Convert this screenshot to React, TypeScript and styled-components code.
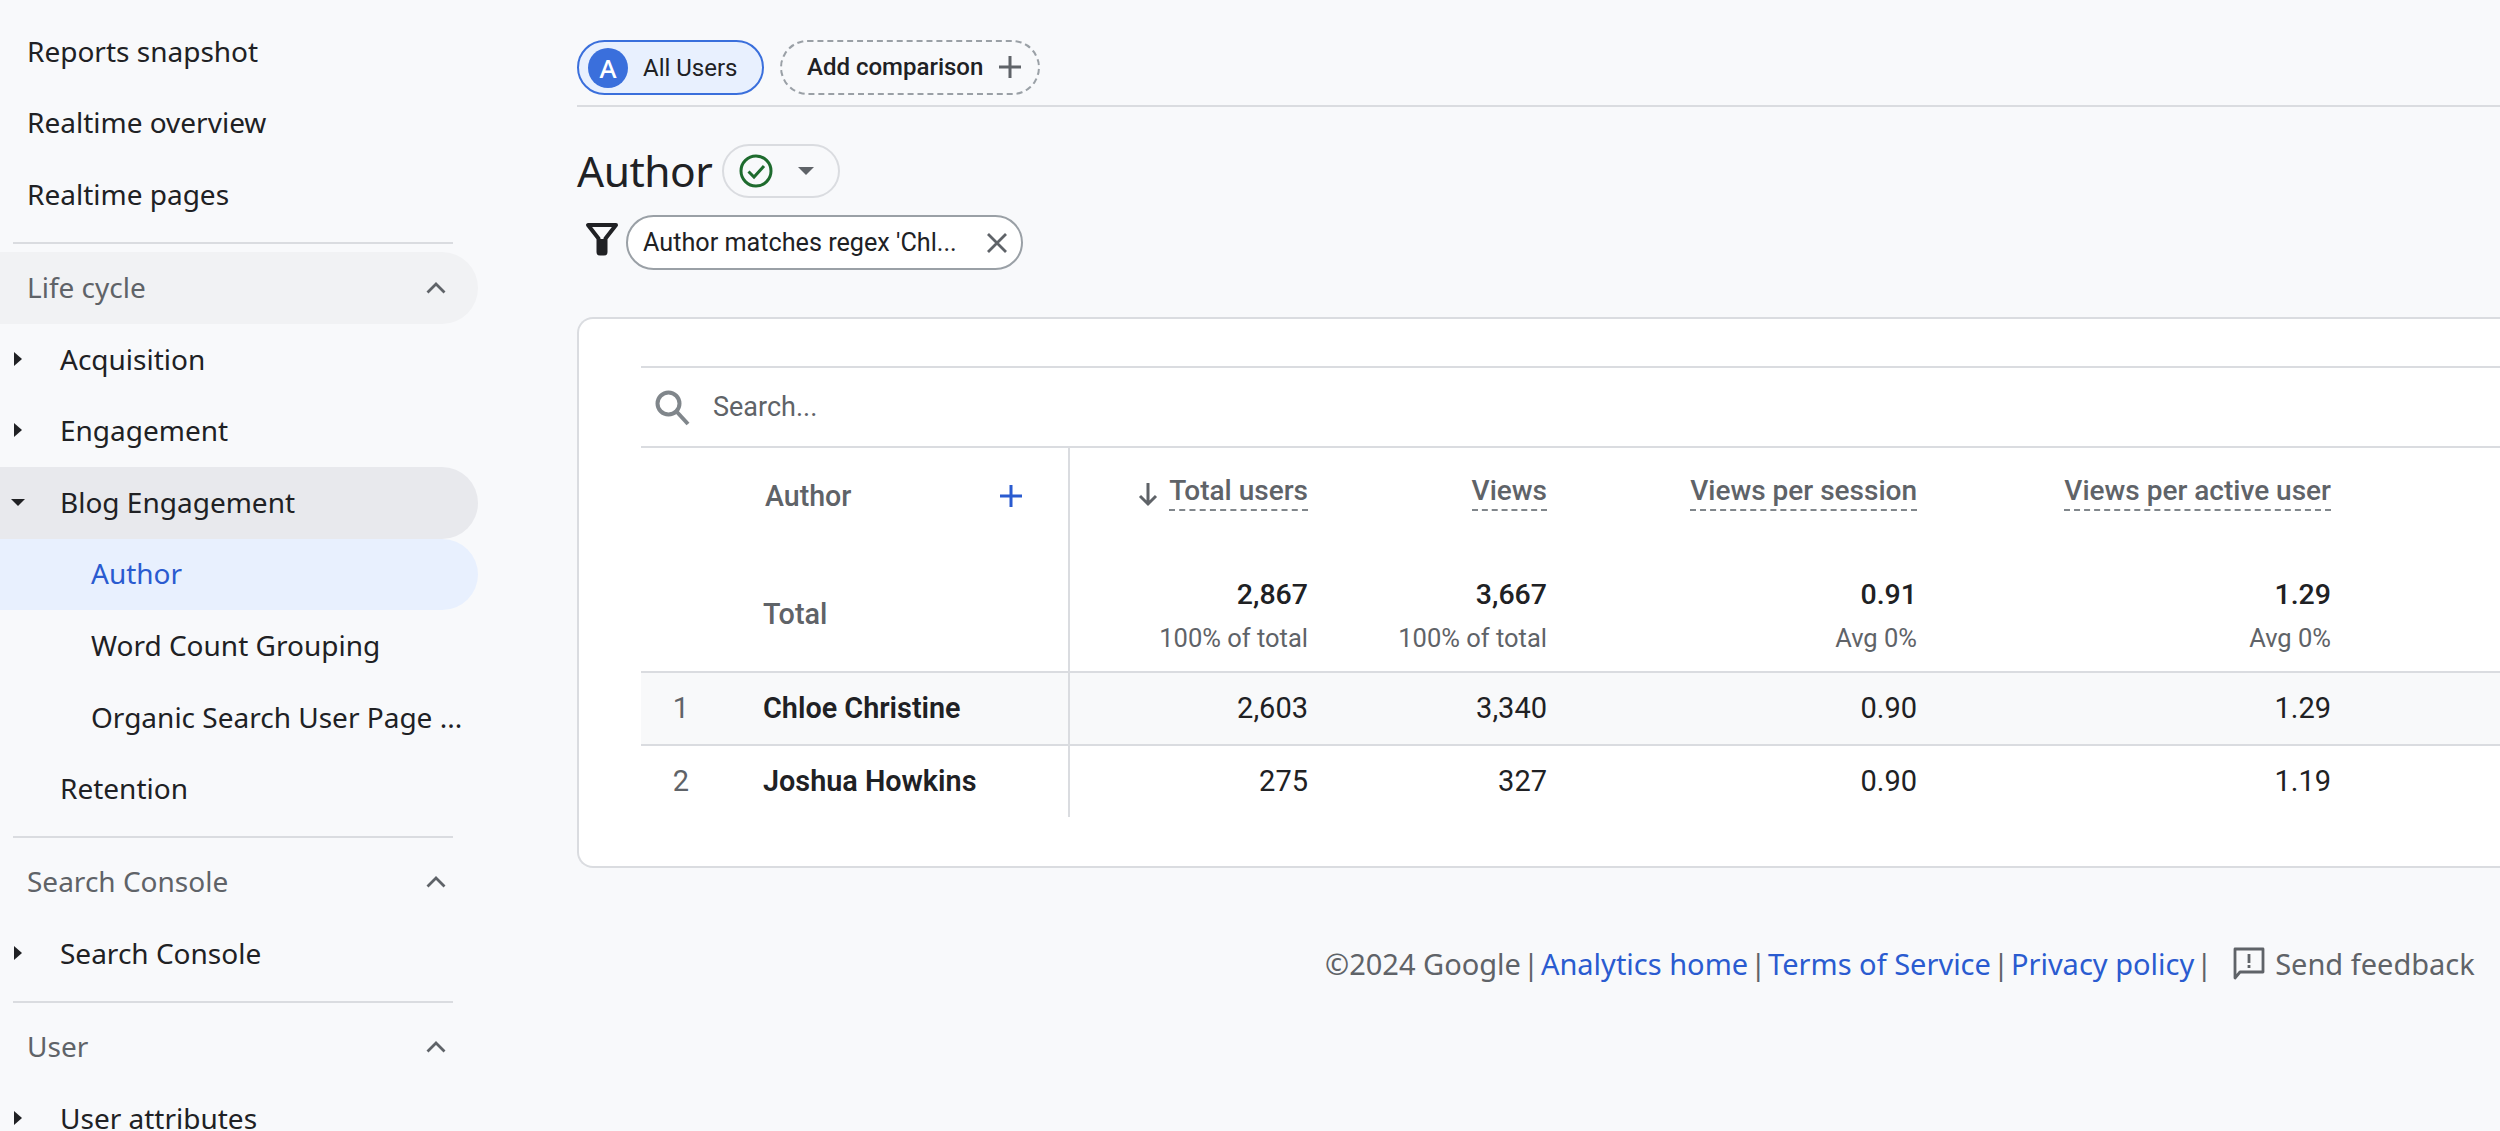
import React from 'react';
import styled, { createGlobalStyle } from 'styled-components';

const colors = {
  page: '#f8f9fb',
  ink: '#202124',
  grey: '#5f6368',
  line: '#dadce0',
  blue: '#2a5bd0',
  chipBlue: '#3a6fdc',
  paleBlue: '#e8f0fe',
};

const SANS = '"Noto Sans", "Open Sans", sans-serif';
const ROBOTO = 'Roboto, "Liberation Sans", sans-serif';

const GlobalStyle = createGlobalStyle`
  html, body {
    margin: 0;
    height: 100%;
    overflow: hidden;
    background: ${colors.page};
  }
  * {
    box-sizing: border-box;
  }
`;

const Page = styled.div`
  display: flex;
  height: 1131px;
  overflow: hidden;
`;

const Sidebar = styled.nav`
  flex: 0 0 577px;
  padding-top: 16px;
  font-family: ${SANS};
  font-size: 28px;
`;

const NavRow = styled.div<{ $depth?: number; $tone?: 'head' | 'open' | 'active' }>`
  display: flex;
  align-items: center;
  width: 478px;
  height: 71.6px;
  padding-left: ${(p) => (p.$depth === 2 ? 91 : p.$depth === 1 ? 60 : 27)}px;
  padding-right: 32px;
  padding-bottom: 2px;
  border-radius: 0 36px 36px 0;
  white-space: nowrap;
  color: ${(p) => (p.$tone === 'active' ? colors.blue : colors.ink)};
  background: ${(p) =>
    p.$tone === 'active' ? colors.paleBlue : p.$tone === 'open' ? '#e8e9ed' : 'transparent'};
`;

const CaretRow = styled(NavRow)`
  padding-left: 0;
`;

const CaretSlot = styled.span`
  display: flex;
  flex: 0 0 60px;
  padding-left: 11px;
`;

const SectionRow = styled(NavRow)<{ $hover?: boolean }>`
  justify-content: space-between;
  color: ${colors.grey};
  background: ${(p) => (p.$hover ? '#f1f2f4' : 'transparent')};
`;

const NavDivider = styled.div`
  width: 440px;
  height: 2px;
  margin: 11px 0 8.5px 13px;
  background: ${colors.line};
`;

const Main = styled.main`
  flex: 1;
  min-width: 0;
  padding-top: 40px;
`;

const ChipBar = styled.div`
  display: flex;
  gap: 16px;
  height: 67px;
  padding-bottom: 12px;
  border-bottom: 2px solid ${colors.line};
  font-family: ${ROBOTO};
  font-size: 24px;
`;

const SegmentChip = styled.div`
  display: flex;
  align-items: center;
  width: 187px;
  height: 55px;
  padding-left: 9px;
  border: 2px solid ${colors.chipBlue};
  border-radius: 28px;
  background: ${colors.paleBlue};
  color: ${colors.ink};
`;

const SegmentBadge = styled.span`
  display: flex;
  align-items: center;
  justify-content: center;
  width: 40px;
  height: 40px;
  margin-right: 15px;
  border-radius: 50%;
  background: ${colors.chipBlue};
  color: #fff;
  font-family: ${SANS};
  font-size: 26px;
  font-weight: 500;
`;

const AddChip = styled.div`
  display: flex;
  align-items: center;
  justify-content: space-between;
  width: 260px;
  height: 55px;
  padding: 0 16px 2px 25px;
  border: 2px dashed #9aa0a6;
  border-radius: 28px;
  color: ${colors.ink};
  font-weight: 500;
`;

const TitleRow = styled.div`
  display: flex;
  align-items: center;
  gap: 10px;
  height: 54px;
  margin-top: 37px;
`;

const Title = styled.h1`
  margin: 0 0 2px;
  font-family: ${SANS};
  font-size: 42.5px;
  font-weight: 400;
  color: ${colors.ink};
  letter-spacing: -0.5px;
`;

const StatusPill = styled.div`
  display: flex;
  align-items: center;
  gap: 24px;
  width: 118px;
  height: 54px;
  padding-left: 15px;
  border: 2px solid ${colors.line};
  border-radius: 27px;
`;

const FilterRow = styled.div`
  display: flex;
  align-items: center;
  gap: 7px;
  height: 55px;
  margin-top: 17px;
  padding-left: 8px;
`;

const FilterGlyph = styled.span`
  display: flex;
  margin-bottom: 8px;
`;

const FilterChip = styled.div`
  display: flex;
  align-items: center;
  justify-content: space-between;
  width: 397px;
  height: 55px;
  padding: 0 12px 0 15px;
  border: 2px solid #9aa0a6;
  border-radius: 28px;
  background: #fff;
  font-family: ${ROBOTO};
  font-size: 25.2px;
  color: ${colors.ink};
`;

const Card = styled.section`
  height: 551px;
  margin-top: 47px;
  padding: 47px 0 0 62px;
  border: 2px solid ${colors.line};
  border-right: none;
  border-radius: 16px 0 0 16px;
  background: #fff;
  font-family: ${ROBOTO};
`;

const SearchBar = styled.div`
  display: flex;
  align-items: center;
  gap: 22px;
  height: 82px;
  padding-left: 13px;
  border-top: 2px solid ${colors.line};
  border-bottom: 2px solid ${colors.line};
  font-size: 27px;
  color: ${colors.grey};
`;

const TableRow = styled.div<{ $height: number; $shaded?: boolean; $rule?: boolean }>`
  display: grid;
  grid-template-columns: 429px 238px 239px 370px 414px 1fr;
  height: ${(p) => p.$height}px;
  background: ${(p) => (p.$shaded ? '#f8f9fa' : 'transparent')};
  border-bottom: ${(p) => (p.$rule ? `2px solid ${colors.line}` : 'none')};
`;

const DimCell = styled.div`
  display: flex;
  align-items: center;
  padding-bottom: 2px;
  border-right: 2px solid ${colors.line};
`;

const HeadDim = styled(DimCell)`
  justify-content: space-between;
  padding: 0 45px 18px 124px;
  font-size: 28.6px;
  font-weight: 500;
  color: ${colors.grey};
`;

const TotalLabel = styled(DimCell)`
  padding: 0 0 5px 122px;
  font-size: 28.8px;
  font-weight: 500;
  color: ${colors.grey};
`;

const Index = styled.span`
  flex: 0 0 122px;
  padding-right: 42px;
  text-align: center;
  font-size: 29px;
  color: ${colors.grey};
`;

const Name = styled.span`
  font-size: 28.8px;
  font-weight: 600;
  color: ${colors.ink};
`;

const MetricHead = styled.div`
  display: flex;
  align-items: flex-start;
  justify-content: flex-end;
  gap: 11px;
  padding-top: 27px;
`;

const MetricLabel = styled.span`
  padding-bottom: 2px;
  border-bottom: 2px dashed #80868b;
  font-size: 28px;
  font-weight: 500;
  line-height: 32px;
  color: ${colors.grey};
`;

const TotalCell = styled.div`
  display: flex;
  flex-direction: column;
  align-items: flex-end;
  padding-top: 17px;
`;

const TotalValue = styled.span`
  font-size: 28.5px;
  font-weight: 500;
  line-height: 32px;
  color: ${colors.ink};
`;

const TotalNote = styled.span`
  margin-top: 12px;
  font-size: 25.5px;
  line-height: 30px;
  color: ${colors.grey};
`;

const Value = styled.div`
  display: flex;
  align-items: center;
  justify-content: flex-end;
  padding-bottom: 2px;
  font-size: 29px;
  color: ${colors.ink};
`;

const Footer = styled.footer`
  display: flex;
  align-items: center;
  height: 32px;
  margin-top: 79px;
  padding-left: 748px;
  font-family: ${SANS};
  font-size: 29px;
  white-space: nowrap;
  color: ${colors.grey};
`;

const Pipe = styled.span`
  margin: 0 2px;
`;

const FooterLink = styled.span`
  color: ${colors.blue};
`;

const Feedback = styled.span`
  display: flex;
  align-items: center;
  gap: 10px;
  margin-left: 19px;
`;

const CaretRight = () => (
  <svg width="14" height="16" viewBox="0 0 14 16">
    <path d="M3 1l8 7-8 7z" fill={colors.ink} />
  </svg>
);

const CaretDown = () => (
  <svg width="14" height="16" viewBox="0 0 14 16">
    <path d="M0 5h14l-7 7z" fill={colors.ink} />
  </svg>
);

const ChevronUp = () => (
  <svg width="20" height="13" viewBox="0 0 20 13">
    <path d="M1.5 11.5L10 3l8.5 8.5" fill="none" stroke={colors.grey} strokeWidth="2.8" />
  </svg>
);

const PlusIcon = ({ color, size }: { color: string; size: number }) => (
  <svg width={size} height={size} viewBox="0 0 24 24">
    <path d="M12 1v22M1 12h22" fill="none" stroke={color} strokeWidth="3" />
  </svg>
);

const CheckCircle = () => (
  <svg width="34" height="34" viewBox="0 0 34 34">
    <circle cx="17" cy="17" r="15" fill="none" stroke="#1e6b2e" strokeWidth="3" />
    <path d="M9.5 17.5l5.5 5.5 10-11" fill="none" stroke="#1e6b2e" strokeWidth="3" />
  </svg>
);

const GreyCaret = () => (
  <svg width="18" height="10" viewBox="0 0 18 10">
    <path d="M1 1h16l-8 8z" fill={colors.grey} />
  </svg>
);

const FilterIcon = () => (
  <svg width="34" height="34" viewBox="0 0 34 34">
    <path
      d="M3 3h28L20.5 16.5V30a1.5 1.5 0 0 1-1.5 1.5h-4a1.5 1.5 0 0 1-1.5-1.5V16.5z"
      fill="none"
      stroke={colors.ink}
      strokeWidth="4"
      strokeLinejoin="round"
    />
    <path d="M15 17h4v13h-4z" fill={colors.ink} />
  </svg>
);

const CloseIcon = () => (
  <svg width="24" height="24" viewBox="0 0 24 24">
    <path d="M3 3l18 18M21 3L3 21" fill="none" stroke={colors.grey} strokeWidth="2.8" />
  </svg>
);

const SearchIcon = () => (
  <svg width="37" height="37" viewBox="0 0 37 37">
    <circle cx="14.5" cy="14.5" r="11" fill="none" stroke="#80868b" strokeWidth="4" />
    <path d="M22.5 22.5L34 35" fill="none" stroke="#80868b" strokeWidth="4" />
  </svg>
);

const ArrowGlyph = styled.svg`
  margin-top: 6px;
`;

const ArrowDown = () => (
  <ArrowGlyph width="20" height="26" viewBox="0 0 20 26">
    <path d="M10 2v21M2 15l8 8 8-8" fill="none" stroke={colors.grey} strokeWidth="3" />
  </ArrowGlyph>
);

const FeedbackIcon = () => (
  <svg width="32" height="34" viewBox="0 0 32 34">
    <path
      d="M2 3h28v23H7l-5 6z"
      fill="none"
      stroke={colors.grey}
      strokeWidth="2.8"
      strokeLinejoin="round"
    />
    <path d="M16 8v9M16 19v3" fill="none" stroke={colors.grey} strokeWidth="2.8" />
  </svg>
);

const metrics = ['Views', 'Views per session', 'Views per active user'];

const totals = [
  { value: '2,867', note: '100% of total' },
  { value: '3,667', note: '100% of total' },
  { value: '0.91', note: 'Avg 0%' },
  { value: '1.29', note: 'Avg 0%' },
];

const rows = [
  { name: 'Chloe Christine', values: ['2,603', '3,340', '0.90', '1.29'] },
  { name: 'Joshua Howkins', values: ['275', '327', '0.90', '1.19'] },
];

const App = () => {
  return (
    <Page>
      <GlobalStyle />
      <Sidebar>
        <NavRow>Reports snapshot</NavRow>
        <NavRow>Realtime overview</NavRow>
        <NavRow>Realtime pages</NavRow>
        <NavDivider />
        <SectionRow $hover>
          Life cycle
          <ChevronUp />
        </SectionRow>
        <CaretRow>
          <CaretSlot><CaretRight /></CaretSlot>
          Acquisition
        </CaretRow>
        <CaretRow>
          <CaretSlot><CaretRight /></CaretSlot>
          Engagement
        </CaretRow>
        <CaretRow $tone="open">
          <CaretSlot><CaretDown /></CaretSlot>
          Blog Engagement
        </CaretRow>
        <NavRow $depth={2} $tone="active">Author</NavRow>
        <NavRow $depth={2}>Word Count Grouping</NavRow>
        <NavRow $depth={2}>Organic Search User Page ...</NavRow>
        <NavRow $depth={1}>Retention</NavRow>
        <NavDivider />
        <SectionRow>
          Search Console
          <ChevronUp />
        </SectionRow>
        <CaretRow>
          <CaretSlot><CaretRight /></CaretSlot>
          Search Console
        </CaretRow>
        <NavDivider />
        <SectionRow>
          User
          <ChevronUp />
        </SectionRow>
        <CaretRow>
          <CaretSlot><CaretRight /></CaretSlot>
          User attributes
        </CaretRow>
      </Sidebar>

      <Main>
        <ChipBar>
          <SegmentChip>
            <SegmentBadge>A</SegmentBadge>
            All Users
          </SegmentChip>
          <AddChip>
            Add comparison
            <PlusIcon color={colors.grey} size={24} />
          </AddChip>
        </ChipBar>

        <TitleRow>
          <Title>Author</Title>
          <StatusPill>
            <CheckCircle />
            <GreyCaret />
          </StatusPill>
        </TitleRow>

        <FilterRow>
          <FilterGlyph>
            <FilterIcon />
          </FilterGlyph>
          <FilterChip>
            Author matches regex 'Chl...
            <CloseIcon />
          </FilterChip>
        </FilterRow>

        <Card>
          <SearchBar>
            <SearchIcon />
            Search...
          </SearchBar>

          <TableRow $height={114}>
            <HeadDim>
              Author
              <PlusIcon color={colors.blue} size={24} />
            </HeadDim>
            <MetricHead>
              <ArrowDown />
              <MetricLabel>Total users</MetricLabel>
            </MetricHead>
            {metrics.map((label) => (
              <MetricHead key={label}>
                <MetricLabel>{label}</MetricLabel>
              </MetricHead>
            ))}
          </TableRow>

          <TableRow $height={111} $rule>
            <TotalLabel>Total</TotalLabel>
            {totals.map((total) => (
              <TotalCell key={total.value}>
                <TotalValue>{total.value}</TotalValue>
                <TotalNote>{total.note}</TotalNote>
              </TotalCell>
            ))}
          </TableRow>

          {rows.map((row, index) => (
            <TableRow key={row.name} $height={index === 0 ? 73 : 71} $shaded={index === 0} $rule={index === 0}>
              <DimCell>
                <Index>{index + 1}</Index>
                <Name>{row.name}</Name>
              </DimCell>
              {row.values.map((value, column) => (
                <Value key={column}>{value}</Value>
              ))}
            </TableRow>
          ))}
        </Card>

        <Footer>
          ©2024 Google
          <Pipe>|</Pipe>
          <FooterLink>Analytics home</FooterLink>
          <Pipe>|</Pipe>
          <FooterLink>Terms of Service</FooterLink>
          <Pipe>|</Pipe>
          <FooterLink>Privacy policy</FooterLink>
          <Pipe>|</Pipe>
          <Feedback>
            <FeedbackIcon />
            Send feedback
          </Feedback>
        </Footer>
      </Main>
    </Page>
  );
};

export default App;
